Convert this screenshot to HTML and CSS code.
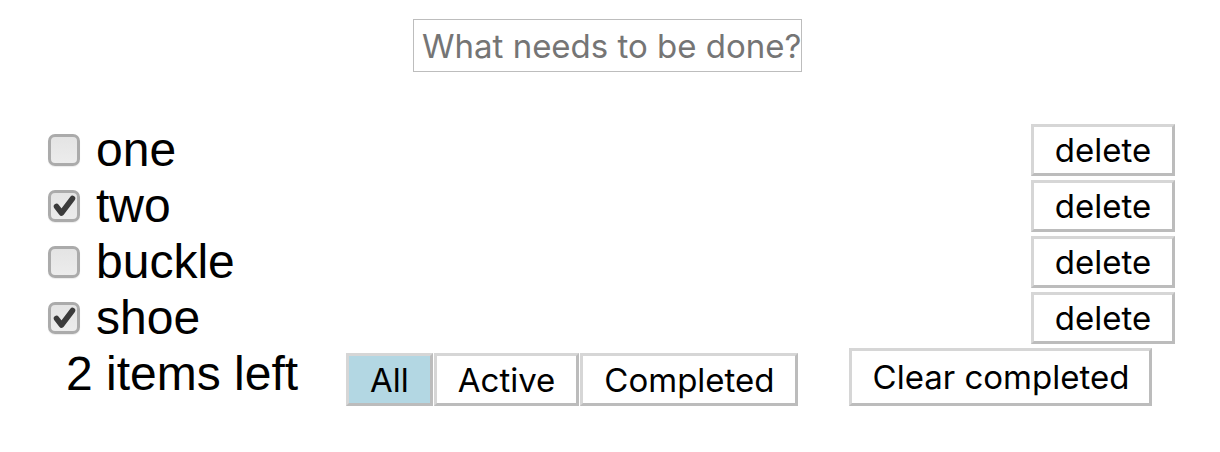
FILE: index.html
```html
<!DOCTYPE html>
<html>
<head>
<meta charset="utf-8">
<link rel="stylesheet" href="styles.css">
</head>
<body>
<div class="app">
  <header class="header">
    <input class="new-todo" type="text" placeholder="What needs to be done?">
  </header>
  <ul class="todo-list">
    <li class="todo">
      <span class="box"></span>
      <span class="label">one</span>
      <button class="btn delete">delete</button>
    </li>
    <li class="todo">
      <span class="box checked"><svg viewBox="0 0 32 32" width="32" height="32"><path d="M8.5 16.5 L13.5 23 L24.5 8.5" fill="none" stroke="#3b3b3b" stroke-width="5.5" stroke-linecap="round" stroke-linejoin="round"/></svg></span>
      <span class="label">two</span>
      <button class="btn delete">delete</button>
    </li>
    <li class="todo">
      <span class="box"></span>
      <span class="label">buckle</span>
      <button class="btn delete">delete</button>
    </li>
    <li class="todo">
      <span class="box checked"><svg viewBox="0 0 32 32" width="32" height="32"><path d="M8.5 16.5 L13.5 23 L24.5 8.5" fill="none" stroke="#3b3b3b" stroke-width="5.5" stroke-linecap="round" stroke-linejoin="round"/></svg></span>
      <span class="label">shoe</span>
      <button class="btn delete">delete</button>
    </li>
  </ul>
  <footer class="footer">
    <span class="count">2 items left</span>
    <div class="filters">
      <button class="btn filter selected">All</button>
      <button class="btn filter">Active</button>
      <button class="btn filter">Completed</button>
    </div>
    <button class="btn clear">Clear completed</button>
  </footer>
</div>
</body>
</html>
```
FILE: styles.css
```css
* { box-sizing: border-box; }
html, body { margin: 0; padding: 0; background: #fff; }
body {
  font-family: "Liberation Sans", Arial, sans-serif;
  color: #000;
}
.app {
  padding: 19px 45px 0 48px;
}
.header {
  display: flex;
  justify-content: center;
  padding-right: 8px;
}
.new-todo {
  width: 389px;
  height: 53px;
  border: 1px solid #bdbdbd;
  padding: 0 0 0 8px;
  font-family: Inter, "Liberation Sans", sans-serif;
  font-size: 33px;
  color: #000;
  outline: none;
}
.new-todo::placeholder { color: #757575; }
.todo-list {
  list-style: none;
  margin: 50px 0 0 0;
  padding: 0;
}
.todo {
  display: flex;
  align-items: center;
  height: 56px;
}
.box {
  width: 32px;
  height: 32px;
  flex: none;
  border: 3px solid #ababab;
  border-radius: 7px;
  background: linear-gradient(#e4e4e4, #ececec);
  box-shadow: 0 1px 1px rgba(0,0,0,0.08);
  position: relative;
  overflow: hidden;
}
.box svg {
  position: absolute;
  left: -3px;
  top: -3px;
}
.label {
  margin-left: 16px;
  font-size: 48px;
  line-height: 56px;
}
.btn {
  font-family: Inter, "Liberation Sans", sans-serif;
  font-size: 33px;
  color: #000;
  background: #fff;
  border-style: solid;
  border-width: 3px;
  border-color: #d6d6d6 #bcbcbc #bcbcbc #d6d6d6;
  padding: 0 21px;
  margin: 0;
  cursor: pointer;
}
.delete {
  margin-left: auto;
  height: 52px;
  width: 144px;
  padding: 0;
  margin-top: 0;
}
.footer {
  display: flex;
  align-items: flex-end;
  height: 59px;
  margin-top: 1px;
}
.count {
  margin-left: 18px;
  font-size: 48px;
  line-height: 48px;
  margin-bottom: 8px;
  width: 280px;
}
.filters {
  display: flex;
  gap: 1px;
}
.filter {
  height: 53px;
  padding: 0 21px;
}
.filter.selected {
  background: #b3d7e3;
}
.clear {
  margin-left: 51px;
  height: 58px;
  width: 303px;
  padding: 0;
}
```
